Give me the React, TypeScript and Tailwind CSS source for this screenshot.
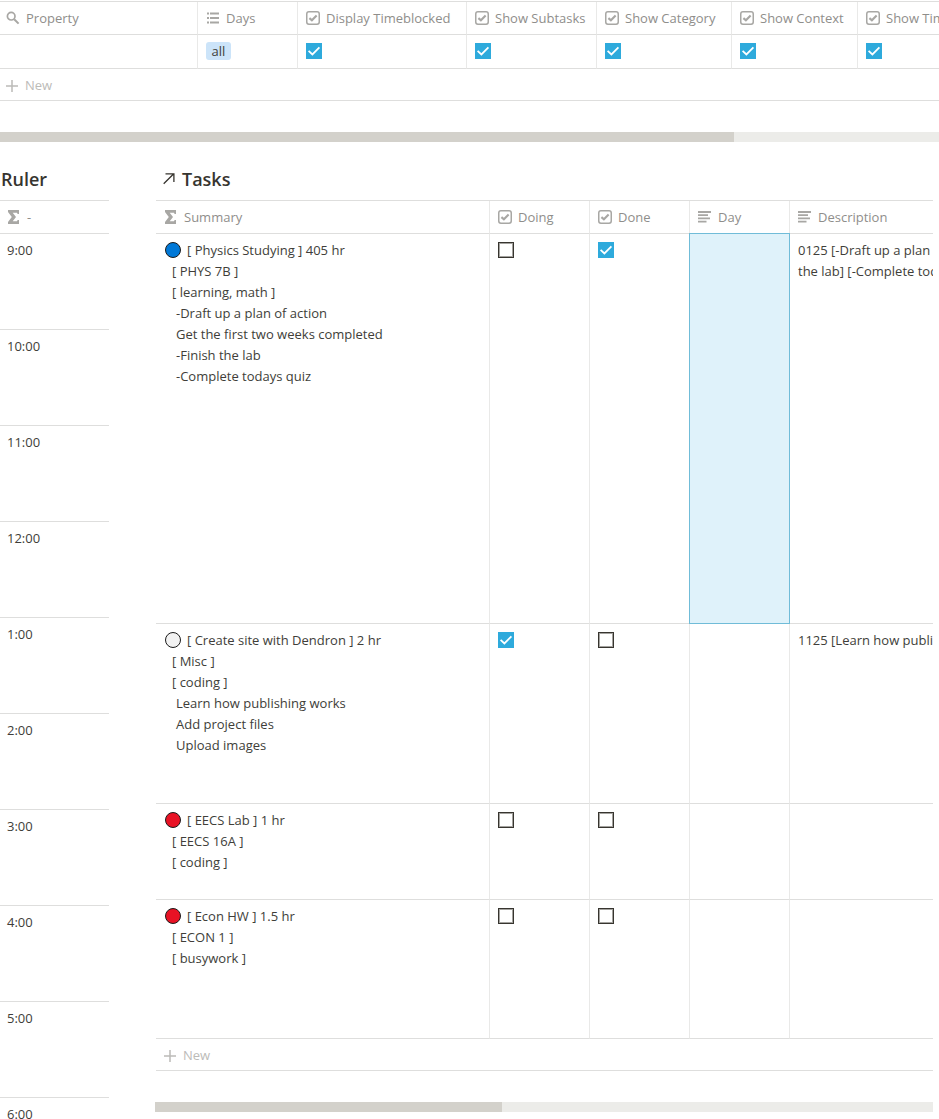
import type { ReactNode } from "react";

const stroke = { fill: "none", stroke: "currentColor" } as const;

function Icon({ children }: { children: ReactNode }) {
  return (
    <svg viewBox="0 0 14 14" aria-hidden="true" className="size-3.5 shrink-0 text-[#a8a7a4]">
      {children}
    </svg>
  );
}

const icons: Record<string, ReactNode> = {
  search: (
    <Icon>
      <circle cx="5.2" cy="5.2" r="3.8" strokeWidth="1.7" {...stroke} />
      <path d="M8.2 8.2L12.6 12.6" strokeWidth="2" {...stroke} />
    </Icon>
  ),
  list: (
    <Icon>
      <path d="M1 2.5h2M1 7h2M1 11.5h2M4 2.5H13M4 7H13M4 11.5H13" strokeWidth="1.8" {...stroke} />
    </Icon>
  ),
  check: (
    <Icon>
      <rect x="0.75" y="0.75" width="12.5" height="12.5" rx="2.2" strokeWidth="1.5" {...stroke} />
      <path d="M3.4 7.1L5.9 9.3L10.6 4.5" strokeWidth="2.1" {...stroke} />
    </Icon>
  ),
  text: (
    <Icon>
      <path d="M0 2h13M0 5.2h10M0 8.4h12M0 11.6h8.5" strokeWidth="1.8" {...stroke} />
    </Icon>
  ),
  sigma: (
    <Icon>
      <path d="M1 0H12V4H10.6L10 2.7H5.7L9 7L5.7 11.3H10L10.6 10H12V14H1V12L4.8 7L1 2Z" fill="currentColor" />
    </Icon>
  ),
};

function Check({ label, checked }: { label: string; checked?: boolean }) {
  return (
    <span className="grid size-4">
      <input
        type="checkbox"
        aria-label={label}
        defaultChecked={checked}
        className="peer col-start-1 row-start-1 size-4 appearance-none border border-[#37352f] bg-white ring-1 ring-[#a3a29e] ring-inset checked:border-[#2eaadc] checked:bg-[#2eaadc] checked:ring-[#2eaadc]"
      />
      <svg
        viewBox="0 0 16 16"
        aria-hidden="true"
        className="pointer-events-none col-start-1 row-start-1 hidden size-4 text-white peer-checked:block"
      >
        <path d="M2.6 7.8L6.4 11.4L13.4 4.4" strokeWidth="1.8" {...stroke} />
      </svg>
    </span>
  );
}

function Head({ icon, children, edge }: { icon: string; children: ReactNode; edge?: string }) {
  return (
    <th
      scope="col"
      className={`h-[33px] border-b border-[#dededd] p-0 text-left font-normal whitespace-nowrap text-[#8f8e8b] ${edge ?? "border-l border-l-[#e9e9e8] pl-2"}`}
    >
      <span className="flex items-center gap-1.5">
        {icons[icon]}
        {children}
      </span>
    </th>
  );
}

function NewRow({ className }: { className: string }) {
  return (
    <button
      type="button"
      className={`flex h-8 w-full items-center gap-[7px] border-b border-[#dededd] pt-0.5 text-[#bcbbb8] ${className}`}
    >
      <svg viewBox="0 0 12 12" aria-hidden="true" className="size-3">
        <path d="M6 0V12M0 6H12" strokeWidth="1.5" {...stroke} />
      </svg>
      New
    </button>
  );
}

const settings = [
  { name: "Display Timeblocked", width: "w-[169px]" },
  { name: "Show Subtasks", width: "w-[130px]" },
  { name: "Show Category", width: "w-[135px]" },
  { name: "Show Context", width: "w-[126px]" },
  { name: "Show Time", width: "w-[344px]" },
];

const hours = ["9:00", "10:00", "11:00", "12:00", "1:00", "2:00", "3:00", "4:00", "5:00", "6:00"];

const tasks = [
  {
    dot: "bg-[#0078d7]",
    height: "h-[390px]",
    title: "[ Physics Studying ] 405 hr",
    tags: ["[ PHYS 7B ]", "[ learning, math ]"],
    notes: ["-Draft up a plan of action", "Get the first two weeks completed", "-Finish the lab", "-Complete todays quiz"],
    doing: false,
    done: true,
    selected: true,
    description: ["0125 [-Draft up a plan of action", "the lab] [-Complete todays quiz]"],
  },
  {
    dot: "bg-[#f2f2f2]",
    height: "h-[180px]",
    title: "[ Create site with Dendron ] 2 hr",
    tags: ["[ Misc ]", "[ coding ]"],
    notes: ["Learn how publishing works", "Add project files", "Upload images"],
    doing: true,
    done: false,
    selected: false,
    description: ["1125 [Learn how publishing works"],
  },
  {
    dot: "bg-[#e81224]",
    height: "h-[96px]",
    title: "[ EECS Lab ] 1 hr",
    tags: ["[ EECS 16A ]", "[ coding ]"],
    notes: [],
    doing: false,
    done: false,
    selected: false,
    description: [],
  },
  {
    dot: "bg-[#e81224]",
    height: "h-[139px]",
    title: "[ Econ HW ] 1.5 hr",
    tags: ["[ ECON 1 ]", "[ busywork ]"],
    notes: [],
    doing: false,
    done: false,
    selected: false,
    description: [],
  },
];

const cell = "border-b border-l border-b-[#dededd] border-l-[#e9e9e8] p-0 pl-2 align-top";
const heading = "mb-2 text-[18px] leading-[26px] font-semibold text-[#37352f]";

export default function App() {
  return (
    <div className="h-screen overflow-hidden bg-white pt-px font-['Open_Sans','Noto_Sans',sans-serif] text-[13px] leading-[21px] text-[#403e39]">
      <section aria-label="Settings">
        <div className="overflow-hidden">
          <table className="w-[1201px] table-fixed border-separate border-spacing-0 border-t border-[#dededd]">
            <colgroup>
              <col className="w-[197px]" />
              <col className="w-[100px]" />
              {settings.map((s) => (
                <col key={s.name} className={s.width} />
              ))}
            </colgroup>
            <thead>
              <tr>
                <Head icon="search" edge="pl-1.5">Property</Head>
                <Head icon="list">Days</Head>
                {settings.map((s) => (
                  <Head key={s.name} icon="check">{s.name}</Head>
                ))}
              </tr>
            </thead>
            <tbody>
              <tr>
                <td className="h-[34px] border-b border-[#dededd] p-0" />
                <td className={cell}>
                  <span className="mt-[7px] flex h-[18px] w-[25px] items-center justify-center rounded-[3px] bg-[#cce4f9]">
                    all
                  </span>
                </td>
                {settings.map((s) => (
                  <td key={s.name} className={`${cell} pt-2`}>
                    <Check label={s.name} checked />
                  </td>
                ))}
              </tr>
            </tbody>
          </table>
        </div>
        <NewRow className="pl-1.5" />
        <div className="mt-[31px] h-2.5 bg-[#ecece9]">
          <div className="h-full w-[78.2%] bg-[#d3d1cb]" />
        </div>
      </section>

      <div className="flex items-start gap-[46px] pt-6 pr-1.5">
        <section className="w-[109px] shrink-0">
          <h2 className={`${heading} pl-px`}>Ruler</h2>
          <table className="w-full border-separate border-spacing-0 border-t border-[#dededd]">
            <thead>
              <tr>
                <Head icon="sigma" edge="pl-[7px]">-</Head>
              </tr>
            </thead>
            <tbody>
              {hours.map((h) => (
                <tr key={h}>
                  <td className="h-24 border-b border-[#dededd] p-0 pt-1.5 pl-[7px] align-top">{h}</td>
                </tr>
              ))}
            </tbody>
          </table>
        </section>

        <section className="min-w-0 flex-1">
          <h2 className={`${heading} flex items-center gap-[7px] pl-2`}>
            <svg viewBox="0 0 12 12" aria-hidden="true" className="size-3">
              <path d="M0.7 10.8L10.5 1M2.5 0.8H10.9V9" strokeWidth="1.3" {...stroke} />
            </svg>
            Tasks
          </h2>
          <div className="ml-px overflow-hidden">
            <table className="w-[1744px] table-fixed border-separate border-spacing-0 border-t border-[#dededd]">
              <colgroup>
                <col className="w-[333px]" />
                <col className="w-[100px]" />
                <col className="w-[100px]" />
                <col className="w-[100px]" />
                <col />
              </colgroup>
              <thead>
                <tr>
                  <Head icon="sigma" edge="pl-2">Summary</Head>
                  <Head icon="check">Doing</Head>
                  <Head icon="check">Done</Head>
                  <Head icon="text">Day</Head>
                  <Head icon="text">Description</Head>
                </tr>
              </thead>
              <tbody>
                {tasks.map((t) => (
                  <tr key={t.title}>
                    <td className={`border-b border-[#dededd] p-0 pt-1.5 pl-2 align-top ${t.height}`}>
                      <p className="flex items-start gap-1.5 pl-px">
                        <span className={`mt-0.5 size-4 rounded-full border border-[#1b1b1b] ${t.dot}`} />
                        {t.title}
                      </p>
                      {t.tags.map((x) => (
                        <p key={x} className="pl-2">{x}</p>
                      ))}
                      {t.notes.map((x) => (
                        <p key={x} className="pl-3">{x}</p>
                      ))}
                    </td>
                    <td className={`${cell} pt-2`}>
                      <Check label={`Doing ${t.title}`} checked={t.doing} />
                    </td>
                    <td className={`${cell} pt-2`}>
                      <Check label={`Done ${t.title}`} checked={t.done} />
                    </td>
                    <td className={`${cell} relative`}>
                      {t.selected && (
                        <div className="absolute -inset-px border border-[#70bcd8] bg-[#dff2fa]" />
                      )}
                    </td>
                    <td className={`${cell} pt-1.5 whitespace-nowrap`}>
                      {t.description.map((x) => (
                        <p key={x}>{x}</p>
                      ))}
                    </td>
                  </tr>
                ))}
              </tbody>
            </table>
          </div>
          <div className="pl-px">
            <NewRow className="pl-2" />
          </div>
          <div className="mt-[31px] h-2.5 bg-[#ecece9]">
            <div className="h-full w-[44.6%] bg-[#d3d1cb]" />
          </div>
        </section>
      </div>
    </div>
  );
}
